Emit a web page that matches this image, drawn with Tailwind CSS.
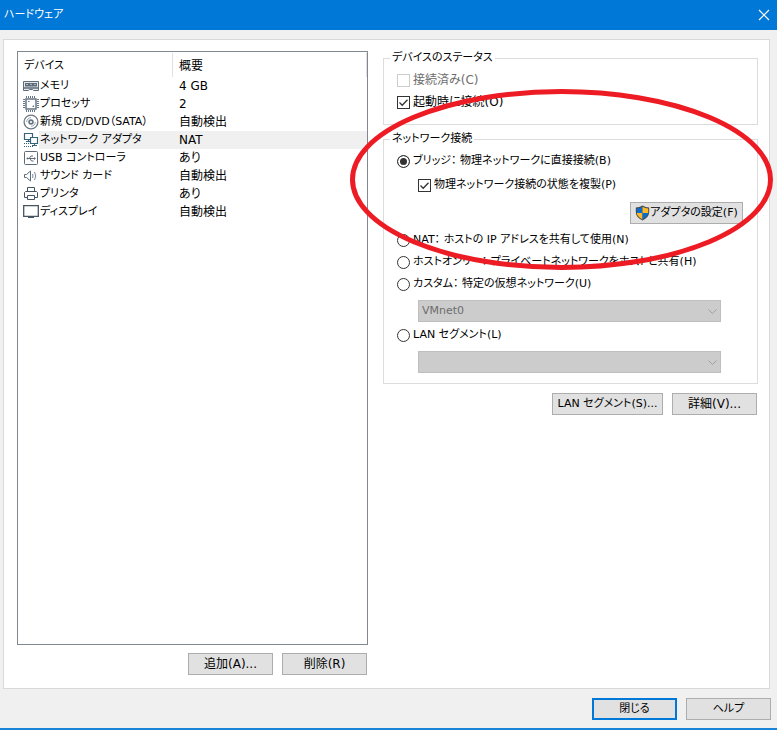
<!DOCTYPE html>
<html lang="ja">
<head>
<meta charset="utf-8">
<meta name="viewport" content="width=device-width, initial-scale=1">
<title>ハードウェア</title>
<script src="https://cdn.jsdelivr.net/npm/@tailwindcss/browser@4"></script>
</head>
<body class="flex min-h-screen flex-col border-b-2 border-[#1883d7] bg-[#f0f0f0] font-['DejaVu_Sans','Noto_Sans_CJK_JP',sans-serif] text-xs text-black [font-feature-settings:'palt']">
  <header class="flex h-[30px] items-center justify-between bg-[#0078d7] pr-[7px] pl-1 text-white">
    <h1 class="text-[11px]">ハードウェア</h1>
    <button type="button" aria-label="閉じる" class="grid size-3 place-items-center">
      <svg class="size-3" viewBox="0 0 12 12" fill="none" stroke="#fff" stroke-width="1.2"><path d="M1 1l10 10M11 1L1 11"/></svg>
    </button>
  </header>

  <main class="mt-[9px] mr-[7px] ml-[3px] grid flex-1 grid-cols-[351fr_375fr] gap-[15px] border border-[#d9d9d9] bg-white pt-[9px] pr-[11px] pb-[13px] pl-[13px]">
    <section class="flex flex-col pt-0.5">
      <div class="flex-1 border border-[#828790]">
        <table class="w-full table-fixed border-collapse text-left">
          <colgroup><col class="w-[155px]"><col></colgroup>
          <thead>
            <tr class="h-[25px]">
              <th class="p-0 pt-px"><div class="h-6 border-r border-[#e0e0e0] pl-1.5 text-[11px] leading-[26px] font-normal">デバイス</div></th>
              <th class="p-0 pt-px"><div class="h-6 border-r border-[#e0e0e0] pl-1.5 leading-[26px] font-normal">概要</div></th>
            </tr>
          </thead>
          <tbody>
            <tr class="h-[18px]">
              <td class="p-0 text-[11px]"><div class="flex h-[18px] items-center pl-[5px]">
                <svg class="size-4 shrink-0" viewBox="0 0 16 16" fill="none" stroke="#5d6b78"><path d="M.5 3.500h15v9h-5l-1-1h-3l-1 1h-5z" fill="#e3e8ec"/><path d="M0 10h16" stroke-width="1.500"/><path d="M2 5h12v3.500H2z" fill="#5d6b78" stroke="none"/><path d="M3 6.500h2M7 6.500h2M11 6.500h2" stroke="#aeb8c0"/></svg>
                <span class="ml-px leading-[18px]">メモリ</span></div></td>
              <td class="p-0 pl-1.5">4 GB</td>
            </tr>
            <tr class="h-[18px]">
              <td class="p-0 text-[11px]"><div class="flex h-[18px] items-center pl-[5px]">
                <svg class="size-4 shrink-0" viewBox="0 0 16 16" fill="none" stroke="#687683"><path d="M3 3h10v10H3z" stroke-width="1.500"/><path d="M3.500 0v2M5.500 0v2M7.500 0v2M9.500 0v2M11.500 0v2M3.500 14v2M5.500 14v2M7.500 14v2M9.500 14v2M11.500 14v2M0 3.500h2M0 5.500h2M0 7.500h2M0 9.500h2M0 11.500h2M14 3.500h2M14 5.500h2M14 7.500h2M14 9.500h2M14 11.500h2"/><path d="M5 5.500h1.500M9.500 10.500H11M10.500 9.500v1.500" stroke-width="1.200"/></svg>
                <span class="ml-px leading-[18px]">プロセッサ</span></div></td>
              <td class="p-0 pl-1.5">2</td>
            </tr>
            <tr class="h-[18px]">
              <td class="p-0 text-[11px]"><div class="flex h-[18px] items-center pl-[5px]">
                <svg class="size-4 shrink-0" viewBox="0 0 16 16" fill="none" stroke="#687683"><circle cx="8" cy="8" r="6.900" stroke-width="1.300"/><circle cx="8" cy="8" r="1.900" stroke-width="1.700"/><path d="M3.700 8A4.300 4.300 0 0 1 8 3.700M12.300 8A4.300 4.300 0 0 1 8 12.300" stroke="#9aa5af"/></svg>
                <span class="ml-px leading-[18px]">新規 CD/DVD（SATA）</span></div></td>
              <td class="p-0 pl-1.5">自動検出</td>
            </tr>
            <tr class="h-[18px]" aria-selected="true">
              <td class="p-0 text-[11px]"><div class="flex h-[18px] items-center pl-[5px]">
                <svg class="size-4 shrink-0" viewBox="0 0 16 16" fill="none" stroke="#34637c"><path d="M1.500 1.500h8v6h-8zM3 9.500h4M5.500 8v1" stroke-width="1.200"/><path d="M7.500 5.500h7v6h-7z" fill="#fff" stroke-width="1.200"/><path d="M9 13.500h5M11.500 12v1"/><path d="M1 11.500h5M1 14.500h9" stroke-dasharray="1 1"/></svg>
                <span class="flex-1 bg-[#f0f0f0] pl-px leading-[18px]">ネットワーク アダプタ</span></div></td>
              <td class="bg-[#f0f0f0] p-0 pl-1.5">NAT</td>
            </tr>
            <tr class="h-[18px]">
              <td class="p-0 text-[11px]"><div class="flex h-[18px] items-center pl-[5px]">
                <svg class="size-4 shrink-0" viewBox="0 0 16 16" fill="none" stroke="#5d6b78"><rect x="1.500" y="1.500" width="13" height="13" rx="1"/><path d="M4 8.500h8M6 8.500l2-2.500h2M7 8.500l1.500 2.500h2"/><circle cx="4.500" cy="8.500" r="1" fill="#5d6b78" stroke="none"/><path d="M11 7l2 1.500-2 1.500z" fill="#5d6b78" stroke="none"/></svg>
                <span class="ml-px leading-[18px]">USB コントローラ</span></div></td>
              <td class="p-0 pl-1.5">あり</td>
            </tr>
            <tr class="h-[18px]">
              <td class="p-0 text-[11px]"><div class="flex h-[18px] items-center pl-[5px]">
                <svg class="size-4 shrink-0" viewBox="0 0 16 16" fill="none" stroke="#5d6b78"><path d="M1.500 6.500h2L7.500 3v10l-4-3.500h-2z"/><path d="M9.500 6q1 2 0 4M11.500 4q2.500 4 0 8" stroke="#7c8893"/></svg>
                <span class="ml-px leading-[18px]">サウンド カード</span></div></td>
              <td class="p-0 pl-1.5">自動検出</td>
            </tr>
            <tr class="h-[18px]">
              <td class="p-0 text-[11px]"><div class="flex h-[18px] items-center pl-[5px]">
                <svg class="size-4 shrink-0" viewBox="0 0 16 16" fill="none" stroke="#46545f"><path d="M4.500 5.500v-4h7v4M4.500 11.500h-3v-5l1-1h11l1 1v5h-3M4.500 9.500h7v4h-7z"/></svg>
                <span class="ml-px leading-[18px]">プリンタ</span></div></td>
              <td class="p-0 pl-1.5">あり</td>
            </tr>
            <tr class="h-[18px]">
              <td class="p-0 text-[11px]"><div class="flex h-[18px] items-center pl-[5px]">
                <svg class="size-4 shrink-0" viewBox="0 0 16 16" fill="none" stroke="#46545f"><path d="M.7 1.700h14.600v10.600H.7z" stroke-width="1.300"/><path d="M5 12h6v2H5z" fill="#46545f" stroke="none"/></svg>
                <span class="ml-px leading-[18px]">ディスプレイ</span></div></td>
              <td class="p-0 pl-1.5">自動検出</td>
            </tr>
          </tbody>
        </table>
      </div>
      <div class="mt-2 flex justify-end gap-[9px] pr-px">
        <button type="button" class="h-[22px] w-[85px] border border-[#adadad] bg-[#e1e1e1]">追加(A)...</button>
        <button type="button" class="h-[22px] w-[85px] border border-[#adadad] bg-[#e1e1e1]">削除(R)</button>
      </div>
    </section>

    <section class="flex min-w-0 flex-col">
      <fieldset class="border border-[#dcdcdc] px-[13px] pt-0.5 pb-[11px]">
        <legend class="-ml-[7px] px-0.5 text-[11px] leading-[18px]">デバイスのステータス</legend>
        <label class="flex h-[22px] items-center gap-[3px] text-[#6d6d6d]">
          <input type="checkbox" disabled class="size-[13px] appearance-none border border-[#ccc] bg-white">接続済み(C)
        </label>
        <label class="flex h-[22px] items-center gap-[3px]">
          <span class="grid size-[13px]">
            <input type="checkbox" checked class="peer col-start-1 row-start-1 size-[13px] appearance-none border border-[#333] bg-white">
            <svg class="pointer-events-none invisible col-start-1 row-start-1 size-[13px] peer-checked:visible" viewBox="0 0 13 13" fill="none" stroke="#333" stroke-width="1.300"><path d="M2.500 6.500l2.700 2.700 5.300-5.500"/></svg>
          </span>起動時に接続(O)
        </label>
      </fieldset>

      <div class="relative mt-[5px] text-[11px]">
        <fieldset class="border border-[#dcdcdc] px-[13px] pt-0.5 pb-2.5">
          <legend class="-ml-[7px] px-0.5 leading-[18px]">ネットワーク接続</legend>
          <label class="flex h-[22px] items-center gap-[3px]">
            <input type="radio" name="net" checked class="size-[13px] appearance-none rounded-full border border-[#333] bg-white checked:bg-[#333] checked:shadow-[inset_0_0_0_2px_white]">ブリッジ： 物理ネットワークに直接接続(B)
          </label>
          <label class="mt-0.5 ml-[21px] flex h-[22px] items-center gap-[3px]">
            <span class="grid size-[13px]">
              <input type="checkbox" checked class="peer col-start-1 row-start-1 size-[13px] appearance-none border border-[#333] bg-white">
              <svg class="pointer-events-none invisible col-start-1 row-start-1 size-[13px] peer-checked:visible" viewBox="0 0 13 13" fill="none" stroke="#333" stroke-width="1.300"><path d="M2.500 6.500l2.700 2.700 5.300-5.500"/></svg>
            </span>物理ネットワーク接続の状態を複製(P)
          </label>
          <div class="mt-1.5 mb-[5px] flex justify-end pr-px">
            <button type="button" class="flex h-[22px] w-[113px] items-center justify-center border border-[#adadad] bg-[#e1e1e1] whitespace-nowrap">
              <svg class="h-4 w-[15px] shrink-0" viewBox="0 0 15 16"><path d="M7.500.5Q4.500 2.500.8 2.500V7Q1 12.500 7.500 15.500 14 12.500 14.200 7V2.500Q10.500 2.500 7.500.5z" fill="#4a4a48"/><path d="M7.500 1.700V8H1.800V3.500Q5 3.400 7.500 1.700z" fill="#0a6cce"/><path d="M7.500 1.700V8h5.700V3.500Q10 3.400 7.500 1.700z" fill="#fdb827"/><path d="M7.500 8v6.400Q2.400 12 1.800 8z" fill="#fdb827"/><path d="M7.500 8v6.400Q12.600 12 13.200 8z" fill="#0a6cce"/></svg>アダプタの設定(F)
            </button>
          </div>
          <label class="flex h-[22px] items-center gap-[3px]">
            <input type="radio" name="net" class="size-[13px] appearance-none rounded-full border border-[#333] bg-white checked:bg-[#333] checked:shadow-[inset_0_0_0_2px_white]">NAT： ホストの IP アドレスを共有して使用(N)
          </label>
          <label class="flex h-[22px] items-center gap-[3px]">
            <input type="radio" name="net" class="size-[13px] appearance-none rounded-full border border-[#333] bg-white checked:bg-[#333] checked:shadow-[inset_0_0_0_2px_white]">ホストオンリー： プライベートネットワークをホストと共有(H)
          </label>
          <label class="flex h-[22px] items-center gap-[3px]">
            <input type="radio" name="net" class="size-[13px] appearance-none rounded-full border border-[#333] bg-white checked:bg-[#333] checked:shadow-[inset_0_0_0_2px_white]">カスタム： 特定の仮想ネットワーク(U)
          </label>
          <div class="mt-[5px] mr-[23px] ml-[21px] grid items-center">
            <select disabled aria-label="仮想ネットワーク" class="col-start-1 row-start-1 h-[22px] w-full appearance-none border border-[#bfbfbf] bg-[#ccc] px-[3px] text-[#6d6d6d] opacity-100"><option>VMnet0</option></select>
            <svg class="pointer-events-none col-start-1 row-start-1 mr-1 h-[5px] w-[9px] justify-self-end" viewBox="0 0 9 5" fill="none" stroke="#a0a0a0"><path d="M.5.5l4 4 4-4"/></svg>
          </div>
          <label class="mt-0.5 flex h-[22px] items-center gap-[3px]">
            <input type="radio" name="net" class="size-[13px] appearance-none rounded-full border border-[#333] bg-white checked:bg-[#333] checked:shadow-[inset_0_0_0_2px_white]">LAN セグメント(L)
          </label>
          <div class="mt-[5px] mr-[23px] ml-[21px] grid items-center">
            <select disabled aria-label="LAN セグメント" class="col-start-1 row-start-1 h-[22px] w-full appearance-none border border-[#bfbfbf] bg-[#ccc] px-[3px] text-[#6d6d6d] opacity-100"><option></option></select>
            <svg class="pointer-events-none col-start-1 row-start-1 mr-1 h-[5px] w-[9px] justify-self-end" viewBox="0 0 9 5" fill="none" stroke="#a0a0a0"><path d="M.5.5l4 4 4-4"/></svg>
          </div>
        </fieldset>
        <svg aria-hidden="true" class="pointer-events-none absolute -top-[41px] -left-[33px] h-[181px] w-[423px]" viewBox="0 0 423 181" fill="none" stroke="#ed1c24" stroke-width="5"><ellipse cx="211.500" cy="90.500" rx="209" ry="88"/></svg>
      </div>

      <div class="mt-[9px] flex justify-end gap-[9px] pr-px">
        <button type="button" class="h-[22px] w-[111px] border border-[#adadad] bg-[#e1e1e1] text-[11px] whitespace-nowrap">LAN セグメント(S)...</button>
        <button type="button" class="h-[22px] w-[85px] border border-[#adadad] bg-[#e1e1e1]">詳細(V)...</button>
      </div>
    </section>
  </main>

  <footer class="flex justify-end gap-[9px] pt-[9px] pr-1.5 pb-2">
    <button type="button" class="h-[22px] w-[85px] border-2 border-[#0078d7] bg-[#e1e1e1] text-[11px]">閉じる</button>
    <button type="button" class="h-[22px] w-[85px] border border-[#adadad] bg-[#e1e1e1] text-[11px]">ヘルプ</button>
  </footer>
</body>
</html>
